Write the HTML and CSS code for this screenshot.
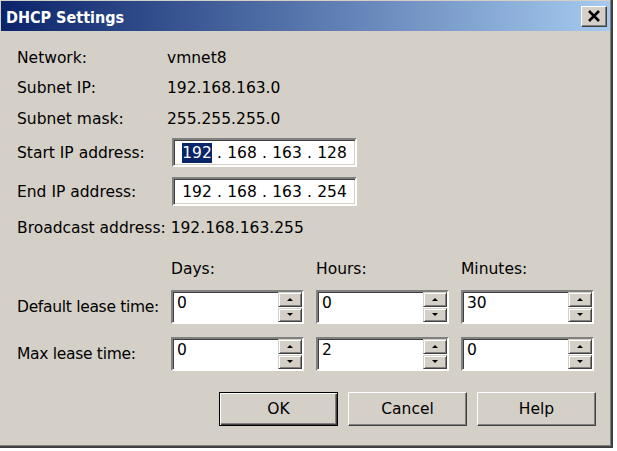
FILE: index.html
```html
<!DOCTYPE html>
<html>
<head>
<meta charset="utf-8">
<title>DHCP Settings</title>
<link rel="stylesheet" href="styles.css">
</head>
<body>
<div class="window">
  <div class="titlebar">
    <span class="title">DHCP Settings</span>
    <span class="close"><svg width="14" height="12" viewBox="0 0 14 12"><path d="M2 1 L12 11 M12 1 L2 11" stroke="#000" stroke-width="2.6" fill="none"/></svg></span>
  </div>
  <div class="content">
    <div class="row"><span class="label">Network:</span><span>vmnet8</span></div>
    <div class="row"><span class="label">Subnet IP:</span><span>192.168.163.0</span></div>
    <div class="row row-tall"><span class="label">Subnet mask:</span><span>255.255.255.0</span></div>
    <div class="row-ip first"><span class="label-wide">Start IP address:</span>
      <div class="ipbox"><span class="oct"><span class="sel">192</span></span><span class="dot">.</span><span class="oct">168</span><span class="dot">.</span><span class="oct">163</span><span class="dot">.</span><span class="oct">128</span></div>
    </div>
    <div class="row-ip second"><span class="label-wide">End IP address:</span>
      <div class="ipbox"><span class="oct">192</span><span class="dot">.</span><span class="oct">168</span><span class="dot">.</span><span class="oct">163</span><span class="dot">.</span><span class="oct">254</span></div>
    </div>
    <div class="row broadcast"><span>Broadcast address: 192.168.163.255</span></div>
    <div class="lease-head">
      <span class="lease-label"></span>
      <span class="col">Days:</span><span class="col">Hours:</span><span class="col">Minutes:</span>
    </div>
    <div class="lease-row first-lease">
      <span class="lease-label">Default lease time:</span>
      <div class="spin"><span class="spin-val">0</span><div class="spin-btns"><span class="sb up"></span><span class="sb down"></span></div></div>
      <div class="spin"><span class="spin-val">0</span><div class="spin-btns"><span class="sb up"></span><span class="sb down"></span></div></div>
      <div class="spin"><span class="spin-val">30</span><div class="spin-btns"><span class="sb up"></span><span class="sb down"></span></div></div>
    </div>
    <div class="lease-row second-lease">
      <span class="lease-label">Max lease time:</span>
      <div class="spin"><span class="spin-val">0</span><div class="spin-btns"><span class="sb up"></span><span class="sb down"></span></div></div>
      <div class="spin"><span class="spin-val">2</span><div class="spin-btns"><span class="sb up"></span><span class="sb down"></span></div></div>
      <div class="spin"><span class="spin-val">0</span><div class="spin-btns"><span class="sb up"></span><span class="sb down"></span></div></div>
    </div>
    <div class="buttons">
      <button class="btn default">OK</button>
      <button class="btn">Cancel</button>
      <button class="btn">Help</button>
    </div>
  </div>
</div>
</body>
</html>
```

FILE: styles.css
```css
* { box-sizing: border-box; }
html, body { margin: 0; padding: 0; background: #fff; }

.window {
  width: 613px;
  height: 448px;
  background: #d4d0c8;
  border-right: 2px solid #404040;
  border-bottom: 2px solid #404040;
  box-shadow: inset -1px -1px 0 #808080;
  font-family: "DejaVu Sans", Verdana, sans-serif;
  font-size: 15.5px;
  color: #000;
  display: flex;
  flex-direction: column;
}

.titlebar {
  height: 30px;
  margin: 1px 1px 0 1px;
  background: linear-gradient(to right, #0a246a, #a6caf0);
  display: flex;
  align-items: center;
  justify-content: space-between;
  padding: 0 3px 0 5px;
}
.title {
  color: #fff;
  font-family: "DejaVu Sans Condensed", "DejaVu Sans", sans-serif;
  font-weight: bold;
  font-size: 16px;
  padding-top: 3px;
}
.close {
  width: 26px;
  height: 21px;
  background: #d4d0c8;
  border: 1px solid;
  border-color: #fff #404040 #404040 #fff;
  box-shadow: inset -1px -1px 0 #808080;
  display: flex;
  align-items: center;
  justify-content: center;
}

.content {
  flex: 1;
  padding: 12px 15px 0 17px;
  display: flex;
  flex-direction: column;
}

.row { display: flex; align-items: center; height: 30px; white-space: nowrap; }
.row-tall { height: 31px; }
.label { width: 150px; flex-shrink: 0; }
.label-wide { width: 155px; flex-shrink: 0; white-space: nowrap; }

.row-ip { display: flex; align-items: center; }
.row-ip.first { margin-top: 4px; }
.row-ip.second { margin-top: 10px; }

.ipbox {
  width: 185px;
  height: 29px;
  background: #fff;
  border: 2px solid;
  border-color: #808080 #fff #fff #808080;
  box-shadow: inset 1px 1px 0 #404040, inset -1px -1px 0 #d4d0c8;
  display: flex;
  align-items: center;
  padding-left: 8px;
}
.oct { width: 30px; text-align: center; line-height: 20px; }
.dot { width: 15px; text-align: center; }
.sel { background: #0a246a; color: #fff; display: inline-block; line-height: 20px; }

.broadcast { margin-top: 7px; }

.lease-head { display: flex; gap: 12px; height: 26px; align-items: center; margin-top: 13px; }
.lease-label { width: 142px; flex-shrink: 0; white-space: nowrap; letter-spacing: -0.3px; }
.col { width: 133px; flex-shrink: 0; }

.lease-row { display: flex; gap: 12px; }
.lease-row .lease-label { align-self: center; }
.first-lease { margin-top: 8px; }
.second-lease { margin-top: 13px; }

.spin {
  width: 133px;
  height: 34px;
  flex-shrink: 0;
  background: #fff;
  border: 2px solid;
  border-color: #808080 #fff #fff #808080;
  box-shadow: inset 1px 1px 0 #404040;
  display: flex;
}
.spin-val { flex: 1; padding: 2px 0 0 4px; line-height: 18px; }
.spin-btns { width: 24px; display: flex; flex-direction: column; gap: 1px; }
.sb {
  flex: 1;
  background: #d4d0c8;
  border: 1px solid;
  border-color: #d4d0c8 #404040 #404040 #d4d0c8;
  box-shadow: inset 1px 1px 0 #fff, inset -1px -1px 0 #808080;
  display: flex;
  align-items: center;
  justify-content: center;
}
.sb::after {
  content: "";
  width: 0;
  height: 0;
  border-left: 3px solid transparent;
  border-right: 3px solid transparent;
}
.up::after { border-bottom: 3px solid #000; }
.down::after { border-top: 3px solid #000; }

.buttons { display: flex; justify-content: flex-end; gap: 10px; margin-top: 21px; }
.btn {
  width: 119px;
  height: 34px;
  background: #d4d0c8;
  font-family: inherit;
  font-size: 15.5px;
  color: #000;
  border: 1px solid;
  border-color: #fff #404040 #404040 #fff;
  box-shadow: inset -1px -1px 0 #808080;
  padding: 0;
  -webkit-appearance: none;
  appearance: none;
}
.btn.default {
  border: 1px solid #000;
  box-shadow: inset 1px 1px 0 #fff, inset -1px -1px 0 #404040, inset -2px -2px 0 #808080;
}
```
